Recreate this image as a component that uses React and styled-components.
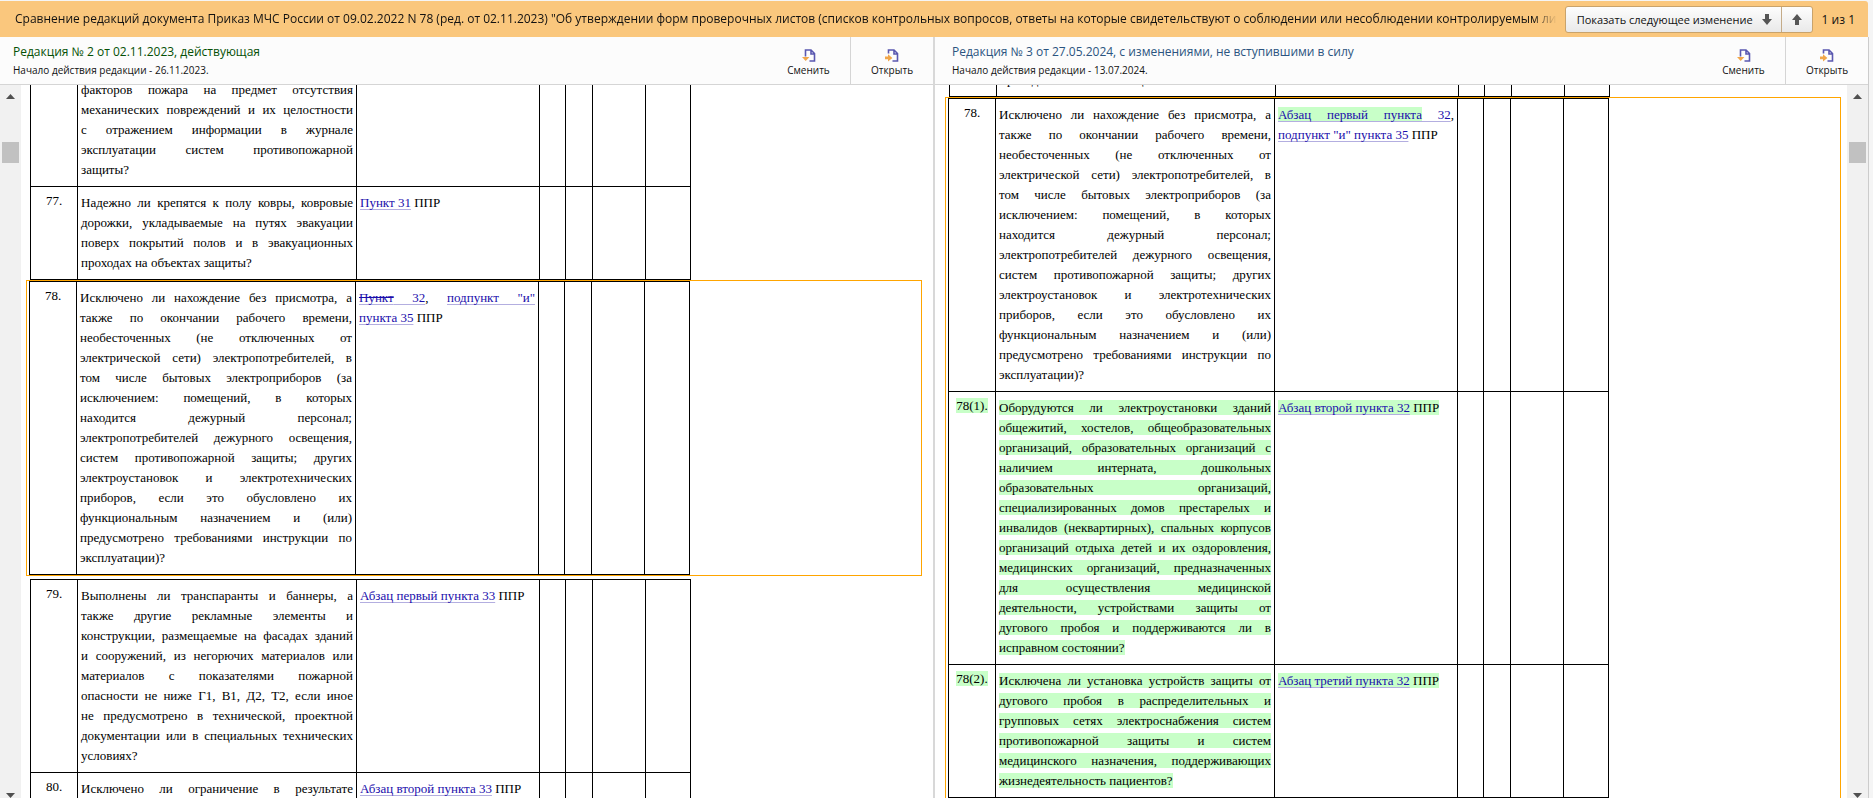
import React from "react";
import styled, { createGlobalStyle } from "styled-components";

const Global = createGlobalStyle`
  * {
    box-sizing: border-box;
  }
  body {
    margin: 0;
    font-family: "Open Sans", "Noto Sans", sans-serif;
    font-size: 12px;
    color: #111;
  }
  button {
    font-family: inherit;
    color: inherit;
    cursor: pointer;
  }
`;

const Page = styled.div`
  display: flex;
  flex-direction: column;
  height: 100vh;
  padding: 1px 4px 0 0;
  background: #f5f5f5;
  overflow: hidden;
`;

const TopBar = styled.header`
  display: flex;
  align-items: center;
  flex: none;
  height: 36px;
  margin-right: 1px;
  padding: 0 13px 0 15px;
  border-radius: 0 3px 0 0;
  background: #fac77d;
`;

const Title = styled.h1`
  flex: 1;
  min-width: 0;
  margin: 0 8px 0 0;
  font-size: 12px;
  font-weight: 400;
  line-height: 20px;
  white-space: nowrap;
  overflow: hidden;
  mask-image: linear-gradient(to left, transparent, black 24px);
`;

const Switcher = styled.div`
  display: flex;
  height: 27px;
  border: 1px solid #c9a36b;
  border-radius: 3px;
  background: linear-gradient(#fdfdfd, #e9e9e9);
`;

const SwitchButton = styled.button`
  display: flex;
  align-items: center;
  gap: 9px;
  padding: 0 9px 0 11px;
  border: 0;
  background: transparent;
  font-size: 11px;
  & + & {
    padding: 0 10px;
    border-left: 1px solid #c4ab88;
  }
`;

const Counter = styled.span`
  margin-left: 9px;
`;

const Panes = styled.main`
  display: flex;
  flex: 1;
  min-height: 0;
`;

const Pane = styled.section`
  display: flex;
  flex-direction: column;
  flex: 1 1 0;
  min-width: 0;
  background: #fff;
  border-right: ${(props) => (props.$left ? "2px solid #d8d8d8" : "1px solid #ccc")};
`;

const PaneHeader = styled.div`
  display: flex;
  flex: none;
  height: 48px;
  padding-left: ${(props) => (props.$left ? 13 : 17)}px;
  border-bottom: 1px solid #d5d5d5;
  background: #fcfcfc;
`;

const Heading = styled.div`
  flex: 1;
  padding-top: 6px;
  line-height: 18px;
`;

const Edition = styled.h2`
  margin: 0;
  font-size: 12px;
  font-weight: 400;
  line-height: 18px;
  color: ${(props) => (props.$left ? "#055005" : "#2b5480")};
`;

const Since = styled.p`
  margin: 0;
  font-size: 10px;
`;

const Tool = styled.button`
  display: flex;
  flex-direction: column;
  align-items: center;
  gap: 1px;
  width: 83px;
  padding: 12px 0 0;
  border: 0;
  background: transparent;
  font-size: 10px;
  line-height: 15px;
  & + & {
    border-left: 1px solid #d5d5d5;
  }
`;

const PaneBody = styled.div`
  display: flex;
  flex: 1;
  flex-direction: ${(props) => (props.$left ? "row" : "row-reverse")};
  min-height: 0;
`;

const Scrollbar = styled.div`
  display: flex;
  flex-direction: column;
  flex: none;
  width: 21px;
  background: #f1f1f1;
`;

const ScrollButton = styled.button`
  display: flex;
  justify-content: center;
  align-items: flex-end;
  height: 14px;
  padding: 0;
  border: 0;
  background: transparent;
`;

const Track = styled.div`
  flex: 1;
  padding: 43px 2px 0;
`;

const Thumb = styled.div`
  height: 21px;
  background: #c1c1c1;
`;

const Viewport = styled.div`
  flex: 1;
  min-width: 0;
  overflow: hidden;
  padding: ${(props) => (props.$left ? "0 11px 0 5px" : "0 6px 0 10px")};
`;

const Sheet = styled.div`
  margin-top: -${(props) => props.$scrolled}px;
  font-family: "Liberation Serif", "Times New Roman", serif;
  font-size: 13px;
  line-height: 20px;
  color: #000;
`;

const Block = styled.div`
  padding-left: 4px;
`;

const ChangedBlock = styled.div`
  margin-bottom: 3px;
  padding-left: 2px;
  border: 1px solid orange;
`;

const Table = styled.table`
  width: 661px;
  table-layout: fixed;
  border-collapse: separate;
  border-spacing: 0;
  border: solid #000;
  border-width: 1px 0 0 1px;
`;

const Cell = styled.td`
  padding: 6px 3px;
  border: solid #000;
  border-width: 0 1px 1px 0;
  text-align: justify;
  vertical-align: top;
`;

const NumberCell = styled(Cell)`
  padding: 4px 0;
  text-align: center;
`;

// every line but the last is stretched to the cell edges
const Line = styled.span`
  display: block;
  text-align-last: justify;
  &:last-child {
    text-align-last: auto;
  }
`;

const Added = styled.ins`
  background: #c8ffc8;
  text-decoration: none;
`;

const DocLink = styled.a`
  color: #1a0dab;
  text-decoration: underline;
  text-decoration-color: #b3aee0;
  text-decoration-thickness: 1px;
  text-decoration-skip-ink: none;
  text-underline-offset: 2px;
  del {
    text-decoration: line-through;
  }
`;

const ArrowDown = () => (
  <svg width="10" height="11" viewBox="0 0 10 11" fill="#555">
    <path d="M3 0h4v5h3L5 11 0 5h3z" />
  </svg>
);

const ArrowUp = () => (
  <svg width="10" height="11" viewBox="0 0 10 11" fill="#555">
    <path d="M3 11h4V6h3L5 0 0 6h3z" />
  </svg>
);

const ChangeIcon = () => (
  <svg width="14" height="13" viewBox="0 0 14 13">
    <path d="M3.5 7.5V1H9l3.5 3.5V12H7.5M9 1v4h3.5" fill="none" stroke="#5a58b0" strokeWidth="1.6" />
    <path d="M0 8h7.4L3.7 12z" fill="#f0a64a" />
  </svg>
);

const OpenIcon = () => (
  <svg width="14" height="13" viewBox="0 0 14 13">
    <path d="M3.5 4.5V1H9l3.5 3.5V12H7.5M9 1v4h3.5" fill="none" stroke="#5a58b0" strokeWidth="1.6" />
    <path d="M0 7.5h3V5.2L7.4 9 3 12.6v-2.3H0z" fill="#f0a64a" />
  </svg>
);

const COLUMNS = [47, 279, 183, 26, 27, 53, 45];

const Rows = ({ rows }) => (
  <Table>
    <colgroup>
      {COLUMNS.map((width, i) => (
        <col key={i} width={width} />
      ))}
    </colgroup>
    <tbody>
      {rows.map((row) => (
        <tr key={row.number}>
          <NumberCell>{row.added ? <Added>{row.number}</Added> : row.number}</NumberCell>
          <Cell>
            {row.lines.map((line) => (
              <Line key={line}>{row.added ? <Added>{line}</Added> : line}</Line>
            ))}
          </Cell>
          <Cell>{row.added ? <Added>{row.source}</Added> : row.source}</Cell>
          <Cell />
          <Cell />
          <Cell />
          <Cell />
        </tr>
      ))}
    </tbody>
  </Table>
);

const Source = ({ children }) => (
  <>
    <DocLink href="#">{children}</DocLink> ППР
  </>
);

const row76 = {
  number: "",
  lines: [
    "факторов пожара на предмет отсутствия",
    "механических повреждений и их целостности",
    "с отражением информации в журнале",
    "эксплуатации систем противопожарной",
    "защиты?",
  ],
};

const row77 = {
  number: "77.",
  lines: [
    "Надежно ли крепятся к полу ковры, ковровые",
    "дорожки, укладываемые на путях эвакуации",
    "поверх покрытий полов и в эвакуационных",
    "проходах на объектах защиты?",
  ],
  source: <Source>Пункт 31</Source>,
};

const lines78 = [
  "Исключено ли нахождение без присмотра, а",
  "также по окончании рабочего времени,",
  "необесточенных (не отключенных от",
  "электрической сети) электропотребителей, в",
  "том числе бытовых электроприборов (за",
  "исключением: помещений, в которых",
  "находится дежурный персонал;",
  "электропотребителей дежурного освещения,",
  "систем противопожарной защиты; других",
  "электроустановок и электротехнических",
  "приборов, если это обусловлено их",
  "функциональным назначением и (или)",
  "предусмотрено требованиями инструкции по",
  "эксплуатации)?",
];

const oldRows = [
  {
    number: "78.",
    lines: lines78,
    source: (
      <>
        <Line>
          <DocLink href="#">
            <del>Пункт</del> 32
          </DocLink>
          , <DocLink href="#">подпункт "и"</DocLink>
        </Line>
        <Line>
          <Source>пункта 35</Source>
        </Line>
      </>
    ),
  },
];

const newRows = [
  {
    number: "78.",
    lines: lines78,
    source: (
      <>
        <Line>
          <DocLink href="#">
            <Added>Абзац первый пункта</Added> 32
          </DocLink>
          ,
        </Line>
        <Line>
          <Source>подпункт "и" пункта 35</Source>
        </Line>
      </>
    ),
  },
  {
    number: "78(1).",
    added: true,
    lines: [
      "Оборудуются ли электроустановки зданий",
      "общежитий, хостелов, общеобразовательных",
      "организаций, образовательных организаций с",
      "наличием интерната, дошкольных",
      "образовательных организаций,",
      "специализированных домов престарелых и",
      "инвалидов (неквартирных), спальных корпусов",
      "организаций отдыха детей и их оздоровления,",
      "медицинских организаций, предназначенных",
      "для осуществления медицинской",
      "деятельности, устройствами защиты от",
      "дугового пробоя и поддерживаются ли в",
      "исправном состоянии?",
    ],
    source: <Source>Абзац второй пункта 32</Source>,
  },
  {
    number: "78(2).",
    added: true,
    lines: [
      "Исключена ли установка устройств защиты от",
      "дугового пробоя в распределительных и",
      "групповых сетях электроснабжения систем",
      "противопожарной защиты и систем",
      "медицинского назначения, поддерживающих",
      "жизнедеятельность пациентов?",
    ],
    source: <Source>Абзац третий пункта 32</Source>,
  },
];

const nextRows = [
  {
    number: "79.",
    lines: [
      "Выполнены ли транспаранты и баннеры, а",
      "также другие рекламные элементы и",
      "конструкции, размещаемые на фасадах зданий",
      "и сооружений, из негорючих материалов или",
      "материалов с показателями пожарной",
      "опасности не ниже Г1, В1, Д2, Т2, если иное",
      "не предусмотрено в технической, проектной",
      "документации или в специальных технических",
      "условиях?",
    ],
    source: <Source>Абзац первый пункта 33</Source>,
  },
  {
    number: "80.",
    lines: ["Исключено ли ограничение в результате", "парковки автомобилей проезда?"],
    source: <Source>Абзац второй пункта 33</Source>,
  },
];

const EditionPane = ({ left, edition, since, scrolled, children }) => (
  <Pane $left={left}>
    <PaneHeader $left={left}>
      <Heading>
        <Edition $left={left}>{edition}</Edition>
        <Since>{since}</Since>
      </Heading>
      <Tool>
        <ChangeIcon />
        Сменить
      </Tool>
      <Tool>
        <OpenIcon />
        Открыть
      </Tool>
    </PaneHeader>
    <PaneBody $left={left}>
      <Scrollbar>
        <ScrollButton aria-label="Вверх">
          <svg width="9" height="5" viewBox="0 0 9 5">
            <path d="M0 5L4.5 0 9 5z" fill="#505050" />
          </svg>
        </ScrollButton>
        <Track>
          <Thumb />
        </Track>
        <ScrollButton aria-label="Вниз">
          <svg width="9" height="5" viewBox="0 0 9 5">
            <path d="M0 0h9L4.5 5z" fill="#505050" />
          </svg>
        </ScrollButton>
      </Scrollbar>
      <Viewport $left={left}>
        <Sheet $scrolled={scrolled}>{children}</Sheet>
      </Viewport>
    </PaneBody>
  </Pane>
);

const App = () => {
  return (
    <Page>
      <Global />
      <TopBar>
        <Title>
          Сравнение редакций документа Приказ МЧС России от 09.02.2022 N 78 (ред. от 02.11.2023) "Об утверждении форм
          проверочных листов (списков контрольных вопросов, ответы на которые свидетельствуют о соблюдении или
          несоблюдении контролируемым лицом обязательных требований)
        </Title>
        <Switcher>
          <SwitchButton>
            Показать следующее изменение
            <ArrowDown />
          </SwitchButton>
          <SwitchButton aria-label="Предыдущее изменение">
            <ArrowUp />
          </SwitchButton>
        </Switcher>
        <Counter>1 из 1</Counter>
      </TopBar>

      <Panes>
        <EditionPane
          left
          edition="Редакция № 2 от 02.11.2023, действующая"
          since="Начало действия редакции - 26.11.2023."
          scrolled={12}
        >
          <Block>
            <Rows rows={[row76, row77]} />
          </Block>
          <ChangedBlock>
            <Rows rows={oldRows} />
          </ChangedBlock>
          <Block>
            <Rows rows={nextRows} />
          </Block>
        </EditionPane>

        <EditionPane
          edition="Редакция № 3 от 27.05.2024, с изменениями, не вступившими в силу"
          since="Начало действия редакции - 13.07.2024."
          scrolled={82}
        >
          <Block>
            <Rows rows={[row77]} />
          </Block>
          <ChangedBlock>
            <Rows rows={newRows} />
          </ChangedBlock>
        </EditionPane>
      </Panes>
    </Page>
  );
};

export default App;
